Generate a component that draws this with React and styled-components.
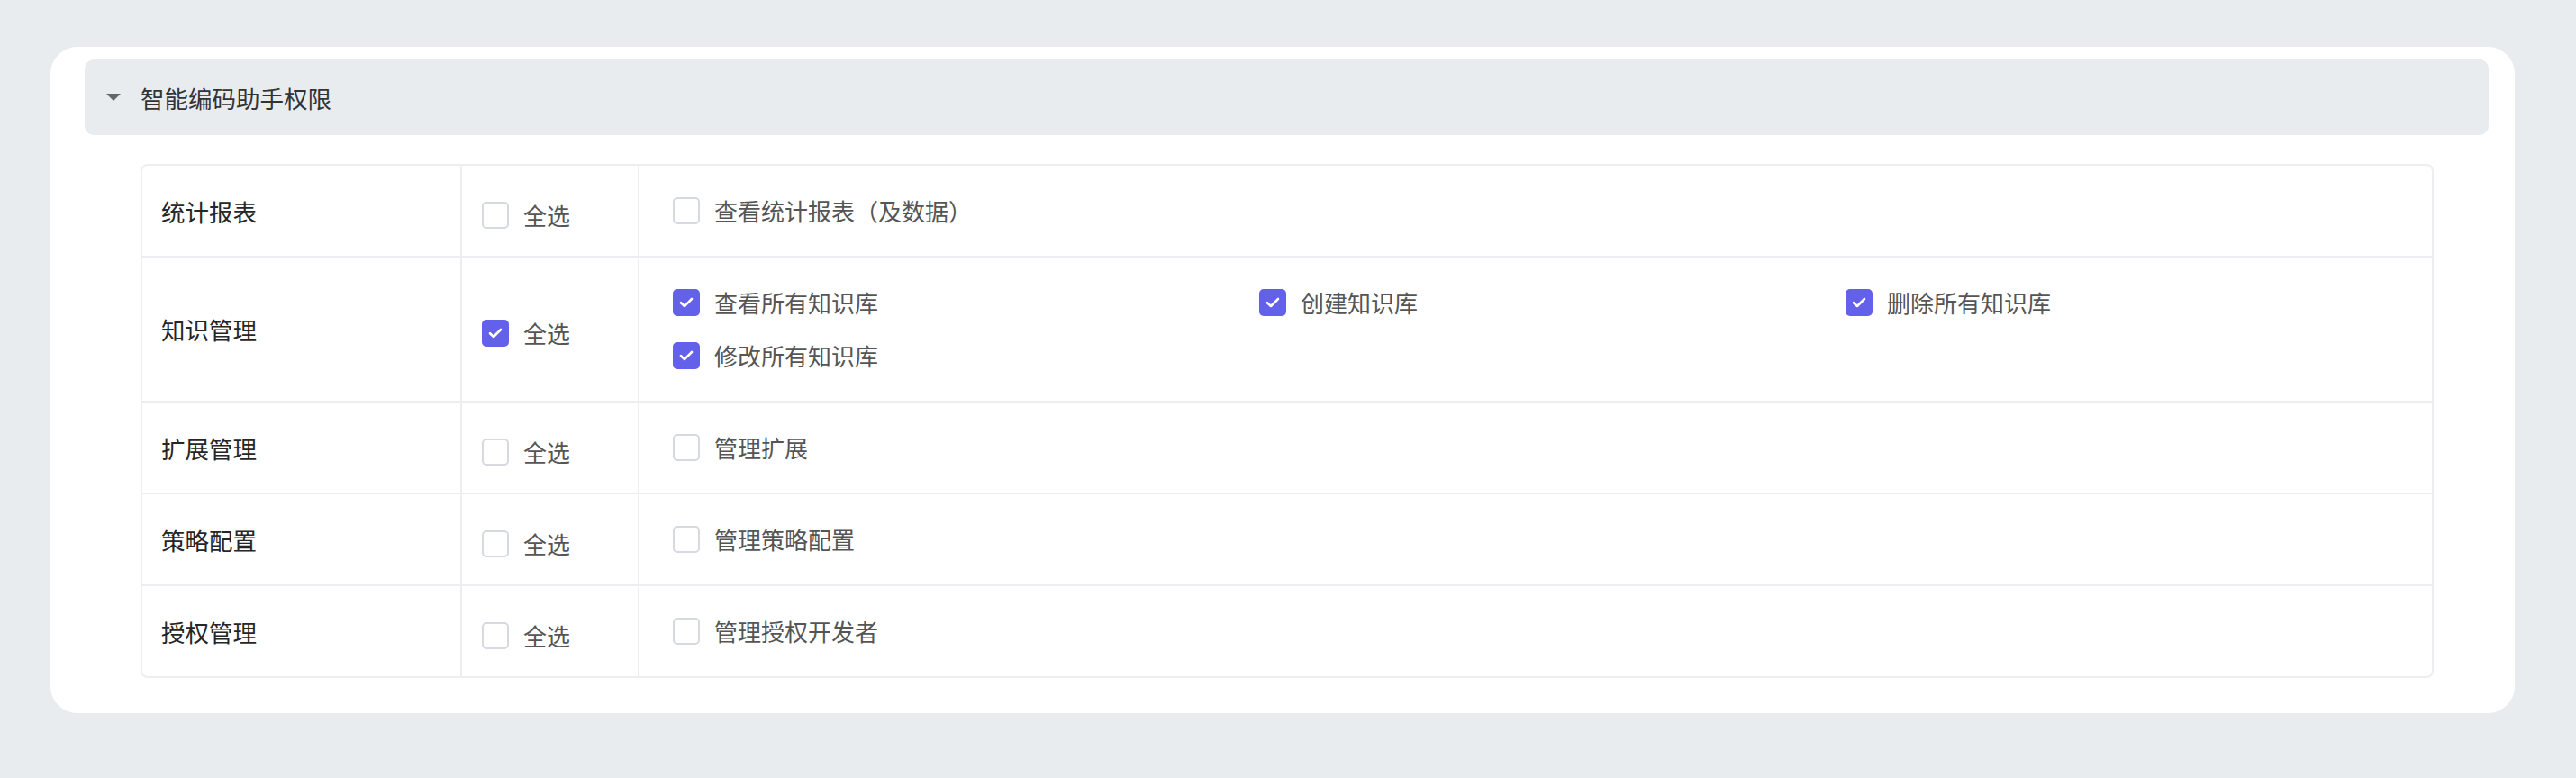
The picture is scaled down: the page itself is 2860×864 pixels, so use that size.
import styled, { createGlobalStyle } from 'styled-components'

const GlobalStyle = createGlobalStyle`
  body {
    margin: 0;
    background: #e9ecef;
    font-family: 'Noto Sans', 'Noto Sans CJK SC', sans-serif;
  }
`

const groups = [
  { name: '统计报表', all: false, options: [{ label: '查看统计报表（及数据）', checked: false }] },
  {
    name: '知识管理',
    all: true,
    options: [
      { label: '查看所有知识库', checked: true },
      { label: '创建知识库', checked: true },
      { label: '删除所有知识库', checked: true },
      { label: '修改所有知识库', checked: true },
    ],
  },
  { name: '扩展管理', all: false, options: [{ label: '管理扩展', checked: false }] },
  { name: '策略配置', all: false, options: [{ label: '管理策略配置', checked: false }] },
  { name: '授权管理', all: false, options: [{ label: '管理授权开发者', checked: false }] },
]

const Page = styled.div`
  padding: 52px 68px 74px 56px;
`

const Card = styled.div`
  background: #fff;
  border-radius: 30px;
  padding: 14px 29px 39px 38px;
`

const SectionHeader = styled.div`
  height: 84px;
  display: flex;
  align-items: center;
  gap: 22px;
  padding-left: 24px;
  background: #e9ecef;
  border-radius: 10px;
  font-size: 26.5px;
  color: #333;
`

const Caret = styled.span`
  width: 0;
  height: 0;
  border-left: 8px solid transparent;
  border-right: 8px solid transparent;
  border-top: 8px solid #666;
`

const SectionBody = styled.div`
  padding: 32px 61px 0 62px;
`

const Table = styled.div`
  border: 2px solid #eceef2;
  border-radius: 8px;
  overflow: hidden;
`

const Row = styled.div`
  display: grid;
  grid-template-columns: 355px 197px 1fr;
  border-bottom: 2px solid #eceef2;

  &:last-child {
    border-bottom: none;
  }
`

const Cell = styled.div`
  box-sizing: border-box;
  display: flex;
  align-items: center;
  border-right: 2px solid #eceef2;

  &:last-child {
    border-right: none;
  }
`

const LabelCell = styled(Cell)`
  padding-left: 21px;
  font-size: 26.5px;
  color: #262626;
`

const AllCell = styled(Cell)`
  padding: 9px 0 0 22px;
`

const OptionsCell = styled(Cell)`
  padding: 35px 0 35px 37px;
`

const OptionGrid = styled.div`
  flex: 1;
  display: grid;
  grid-template-columns: repeat(3, 1fr);
  row-gap: 29px;
`

const Check = styled.label`
  display: flex;
  align-items: center;
  gap: 16px;
  height: 30px;
  font-size: 26px;
  color: #555;
  cursor: pointer;
`

const Box = styled.span`
  box-sizing: border-box;
  width: 30px;
  height: 30px;
  flex-shrink: 0;
  border-radius: 5px;
  display: flex;
  align-items: center;
  justify-content: center;
  background: ${(props) => (props.checked ? '#6360ea' : '#fff')};
  border: 2px solid ${(props) => (props.checked ? '#6360ea' : '#d6dae0')};
`

const Checkbox = ({ checked, children }) => (
  <Check>
    <Box checked={checked}>
      {checked && (
        <svg width='16' height='12' viewBox='0 0 16 12'>
          <path d='M2 6.2 L6 10 L14 2' fill='none' stroke='#fff' strokeWidth='2.6' strokeLinecap='round' strokeLinejoin='round' />
        </svg>
      )}
    </Box>
    {children}
  </Check>
)

const App = () => (
  <Page>
    <GlobalStyle />
    <Card>
      <SectionHeader>
        <Caret />
        智能编码助手权限
      </SectionHeader>
      <SectionBody>
        <Table>
          {groups.map((group) => (
            <Row key={group.name}>
              <LabelCell>{group.name}</LabelCell>
              <AllCell>
                <Checkbox checked={group.all}>全选</Checkbox>
              </AllCell>
              <OptionsCell>
                <OptionGrid>
                  {group.options.map((option) => (
                    <Checkbox key={option.label} checked={option.checked}>
                      {option.label}
                    </Checkbox>
                  ))}
                </OptionGrid>
              </OptionsCell>
            </Row>
          ))}
        </Table>
      </SectionBody>
    </Card>
  </Page>
)

export default App
